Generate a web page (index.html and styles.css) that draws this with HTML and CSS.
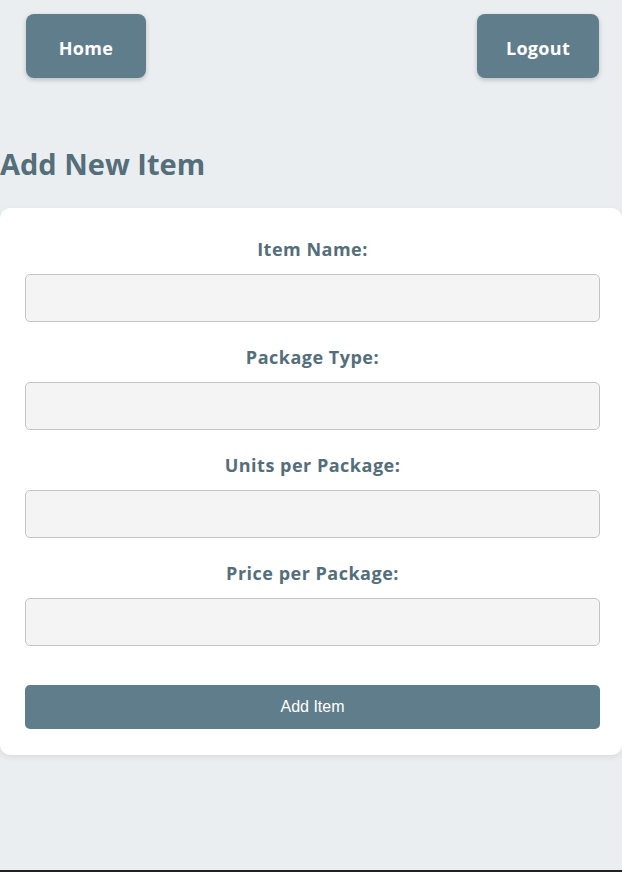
FILE: index.html
```html
<!DOCTYPE html>
<html lang="en">
<head>
<meta charset="utf-8">
<title>Add New Item</title>
<link rel="stylesheet" href="styles.css">
</head>
<body>
  <header class="topbar">
    <button class="nav-btn">Home</button>
    <button class="nav-btn">Logout</button>
  </header>
  <h1 class="title">Add New Item</h1>
  <form class="card">
    <label class="field-label" for="name">Item Name:</label>
    <input class="field-input" id="name" type="text">
    <label class="field-label" for="pkg">Package Type:</label>
    <input class="field-input" id="pkg" type="text">
    <label class="field-label" for="units">Units per Package:</label>
    <input class="field-input" id="units" type="text">
    <label class="field-label" for="price">Price per Package:</label>
    <input class="field-input field-input-last" id="price" type="text">
    <button class="submit-btn" type="button">Add Item</button>
  </form>
  <div class="bottom-strip"></div>
</body>
</html>
```
FILE: styles.css
```css
html, body {
  margin: 0;
  padding: 0;
}
body {
  background: #eaeef1;
  font-family: "Open Sans", "Noto Sans", sans-serif;
  color: #546e7a;
  height: 872px;
  overflow: hidden;
}
.topbar {
  display: flex;
  justify-content: space-between;
  padding: 14px 23px 0 26px;
}
.nav-btn {
  background: #607d8b;
  color: #fff;
  border: none;
  border-radius: 8px;
  height: 64px;
  min-width: 120px;
  padding: 3px 29px 0;
  font-family: inherit;
  font-size: 18px;
  letter-spacing: 0.3px;
  font-weight: 700;
  box-shadow: 0 2px 5px rgba(0,0,0,0.2);
}
.title {
  margin: 67px 0 25px 0;
  font-size: 29px;
  line-height: 38px;
  font-weight: 700;
  color: #546e7a;
}
.card {
  background: #fff;
  border-radius: 10px;
  padding: 30px 22px 26px 25px;
  display: flex;
  flex-direction: column;
  box-shadow: 0 2px 6px rgba(0,0,0,0.08);
}
.field-label {
  text-align: center;
  font-size: 18px;
  letter-spacing: 0.5px;
  font-weight: 700;
  line-height: 22px;
  margin-bottom: 14px;
}
.field-input {
  height: 48px;
  box-sizing: border-box;
  background: #f4f4f4;
  border: 1px solid #c4c4c4;
  border-radius: 5px;
  margin: 0 0 24px 0;
}
.field-input-last {
  margin-bottom: 39px;
}
.submit-btn {
  height: 44px;
  background: #607d8b;
  color: #fff;
  border: none;
  border-radius: 5px;
  font-family: "Liberation Sans", Arial, sans-serif;
  font-size: 16px;
  font-weight: 300;
}
.bottom-strip {
  position: fixed;
  left: 0;
  right: 0;
  bottom: 0;
  height: 2px;
  background: #202124;
}
```
